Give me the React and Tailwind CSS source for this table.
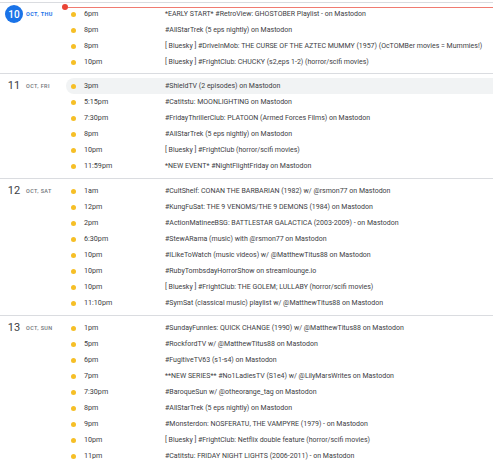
import React from 'react';

const days = [
  {
    num: '10',
    label: 'Oct, Thu',
    today: true,
    events: [
      ['6pm', '*EARLY START* #RetroView: GHOSTOBER Playlist - on Mastodon'],
      ['8pm', '#AllStarTrek (5 eps nightly) on Mastodon'],
      ['8pm', '[ Bluesky ] #DriveInMob: THE CURSE OF THE AZTEC MUMMY (1957) (OcTOMBer movies = Mummies!)'],
      ['10pm', '[ Bluesky ] #FrightClub: CHUCKY (s2,eps 1-2) (horror/scifi movies)'],
    ],
  },
  {
    num: '11',
    label: 'Oct, Fri',
    events: [
      ['3pm', '#ShieldTV (2 episodes) on Mastodon', true],
      ['5:15pm', '#Catitstu: MOONLIGHTING on Mastodon'],
      ['7:30pm', '#FridayThrillerClub: PLATOON (Armed Forces Films) on Mastodon'],
      ['8pm', '#AllStarTrek (5 eps nightly) on Mastodon'],
      ['10pm', '[ Bluesky ] #FrightClub (horror/scifi movies)'],
      ['11:59pm', '*NEW EVENT* #NightFlightFriday on Mastodon'],
    ],
  },
  {
    num: '12',
    label: 'Oct, Sat',
    events: [
      ['1am', '#CultShelf: CONAN THE BARBARIAN (1982) w/ @rsmon77 on Mastodon'],
      ['12pm', '#KungFuSat: THE 9 VENOMS/THE 9 DEMONS (1984) on Mastodon'],
      ['2pm', '#ActionMatineeBSG: BATTLESTAR GALACTICA (2003-2009) - on Mastodon'],
      ['6:30pm', '#StewARama (music) with @rsmon77 on Mastodon'],
      ['10pm', '#ILikeToWatch (music videos) w/ @MatthewTitus88 on Mastodon'],
      ['10pm', '#RubyTombsdayHorrorShow on streamlounge.io'],
      ['10pm', '[ Bluesky ] #FrightClub: THE GOLEM; LULLABY (horror/scifi movies)'],
      ['11:10pm', '#SymSat (classical music) playlist w/ @MatthewTitus88 on Mastodon'],
    ],
  },
  {
    num: '13',
    label: 'Oct, Sun',
    events: [
      ['1pm', '#SundayFunnies: QUICK CHANGE (1990) w/ @MatthewTitus88 on Mastodon'],
      ['5pm', '#RockfordTV w/ @MatthewTitus88 on Mastodon'],
      ['6pm', '#FugitiveTV63 (s1-s4) on Mastodon'],
      ['7pm', '**NEW SERIES** #No1LadiesTV (S1e4) w/ @LilyMarsWrites on Mastodon'],
      ['7:30pm', '#BaroqueSun w/ @otheorange_tag on Mastodon'],
      ['8pm', '#AllStarTrek (5 eps nightly) on Mastodon'],
      ['9pm', '#Monsterdon: NOSFERATU, THE VAMPYRE (1979) - on Mastodon'],
      ['10pm', '[ Bluesky ] #FrightClub: Netflix double feature (horror/scifi movies)'],
      ['11pm', '#Catitstu: FRIDAY NIGHT LIGHTS (2006-2011) - on Mastodon'],
    ],
  },
];

const DayLabel = ({ num, label, today }) => (
  <div className="flex items-center h-[16px] pl-[5px]">
    {today ? (
      <div className="w-[18px] h-[18px] rounded-full bg-[#1a73e8] text-white flex items-center justify-center text-[10px] font-medium">
        {num}
      </div>
    ) : (
      <div className="w-[18px] text-center text-[11px] text-[#3c4043]">{num}</div>
    )}
    <div
      className={`ml-[3px] uppercase text-[5.5px] tracking-[0.4px] ${
        today ? 'text-[#1a73e8] font-bold' : 'text-[#70757a] font-medium'
      }`}
    >
      {label}
    </div>
  </div>
);

const EventRow = ({ time, title, hover }) => (
  <div
    className={`flex items-center h-[16px] pl-[5px] rounded-l-full ${hover ? 'bg-[#f1f3f4]' : ''}`}
  >
    <div className="w-[5px] h-[5px] rounded-full bg-[#f6bf26]" />
    <div className="w-[81px] ml-[8px] shrink-0 text-[7.2px] text-[#3c4043]">{time}</div>
    <div className="whitespace-nowrap text-[7px] text-[#3c4043]">{title}</div>
  </div>
);

export default function App() {
  return (
    <div
      className="w-[493px] h-[467px] overflow-hidden bg-white pt-[2px]"
      style={{ fontFamily: 'Roboto, "Noto Sans", sans-serif' }}
    >
      {days.map((d, i) => (
        <div
          key={d.num}
          className={`relative flex border-t border-[#dadce0] ${i === 0 ? 'pt-[3px] pb-[3px]' : 'pt-[4px] pb-[4px]'}`}
        >
          {d.today && (
            <div className="absolute left-[62px] right-0 top-[1px] flex items-center">
              <div className="w-[6px] h-[6px] rounded-full bg-[#ea4335]" />
              <div className="flex-1 h-[1px] bg-[#ea4335] opacity-70" />
            </div>
          )}
          <div className="w-[66px] shrink-0">
            <DayLabel num={d.num} label={d.label} today={d.today} />
          </div>
          <div className="flex-1">
            {d.events.map((e, j) => (
              <EventRow key={j} time={e[0]} title={e[1]} hover={e[2]} />
            ))}
          </div>
        </div>
      ))}
    </div>
  );
}
